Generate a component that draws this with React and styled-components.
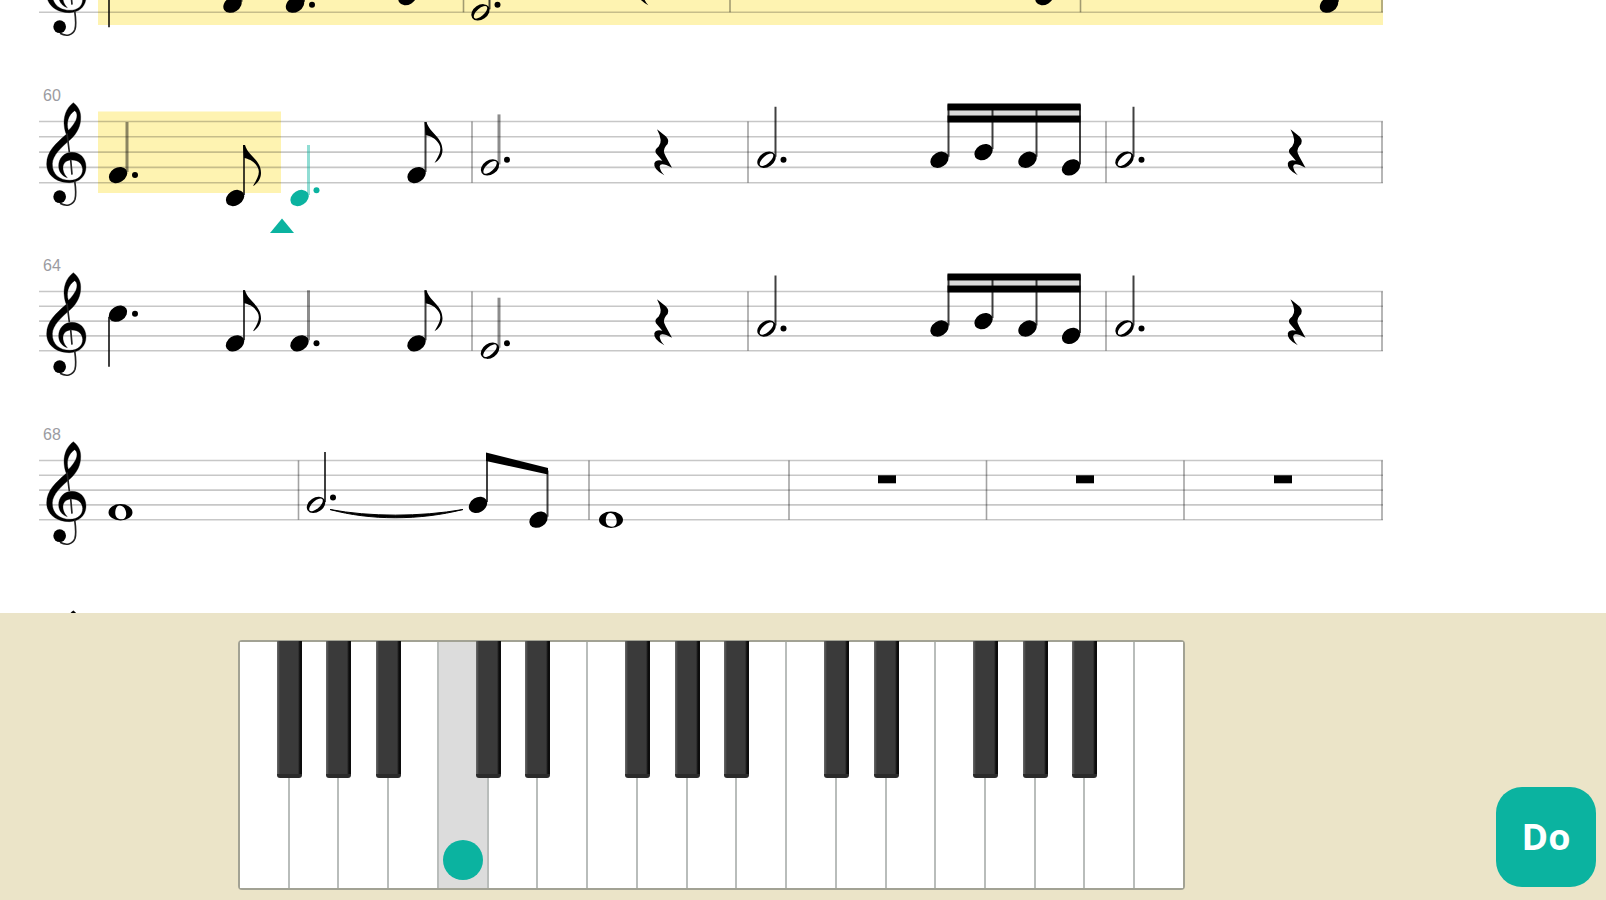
import React from 'react';
import styled, { createGlobalStyle } from 'styled-components';

const TEAL = '#0bb3a0';

const GlobalStyle = createGlobalStyle`
  * {
    box-sizing: border-box;
  }

  body {
    margin: 0;
    background: #fff;
  }
`

const Page = styled.main`
  height: 100vh;
  min-height: 480px;
  display: flex;
  flex-direction: column;
`

const Score = styled.section`
  flex: 1;
  min-height: 0;
  overflow: hidden;
`

/* the sheet is scrolled so that the current staff is the second one */
const Sheet = styled.div`
  margin-top: -85px;
`

const Row = styled.div`
  display: grid;
  height: ${props => props.$height}px;

  > * {
    grid-area: 1 / 1;
  }
`

const MeasureNumber = styled.span`
  padding-left: 43px;
  font-family: 'Liberation Sans Narrow', 'Liberation Sans', sans-serif;
  font-size: 16px;
  line-height: 22px;
  color: #9b9ba1;
`

const StaffSvg = styled.svg`
  display: block;
  width: 100%;
  max-width: 1400px;
  height: 170px;
`

const Panel = styled.section`
  display: flex;
  justify-content: space-between;
  align-items: flex-end;
  gap: 24px;
  padding: 27px 10px 10px 238px;
  background: #ebe4c8;
`

const Keyboard = styled.div`
  flex: 0 1 947px;
  display: flex;
  height: 250px;
  border: 2px solid #a2a294;
  border-radius: 4px;
  background: #fff;
`

const KeySlot = styled.div`
  position: relative;
  flex: 1;
  display: flex;

  & + & {
    border-left: 2px solid #b9bdbb;
  }
`

const WhiteKey = styled.button`
  flex: 1;
  display: flex;
  justify-content: center;
  align-items: flex-end;
  padding: 0 0 8px;
  border: 0;
  background: ${props => props.$active ? '#dcdcdc' : '#fff'};
`

const BlackKey = styled.button`
  position: absolute;
  top: -1px;
  right: -14px;
  z-index: 1;
  width: 25px;
  height: 137px;
  padding: 0;
  border: 0;
  border-bottom: 4px solid #2b2b2b;
  border-radius: 0 0 3px 3px;
  background: linear-gradient(to right, #6a6a6a 0, #3a3a3a 3px, #3a3a3a 21px, #0c0c0c 23px);
`

const KeyDot = styled.span`
  flex: none;
  width: 40px;
  height: 40px;
  border-radius: 50%;
  background: ${TEAL};
`

const NoteButton = styled.button`
  flex: none;
  width: 100px;
  height: 100px;
  margin-bottom: 3px;
  padding: 0;
  border: 0;
  border-radius: 26px;
  background: ${TEAL};
  color: #fff;
  font-family: 'Open Sans', 'Noto Sans', sans-serif;
  font-size: 36px;
  font-weight: 700;
  line-height: 48px;
`

// p counts staff steps down from the top line, h is the kind of head
const fourBars = [472, 748, 1106, 1382];

const sixteenths = [
  { x: 939.5, p: 5, stemTop: -17 },
  { x: 983.5, p: 4, stemTop: -17 },
  { x: 1027.5, p: 5, stemTop: -17 },
  { x: 1071, p: 6, stemTop: -17 },
];

const sixteenthBeams = [
  '947.5,-18 1080.5,-18 1080.5,-11 947.5,-11',
  '947.5,-6 1080.5,-6 1080.5,1 947.5,1',
];

const rows = [
  {
    height: 170, gap: 15.2, bars: [463.5, 730, 1080.5, 1382],
    played: { from: 98, to: 1383, bottom: 73.5 },
    notes: [
      { x: 118, p: 3, down: true },
      { x: 232.5, p: 7 },
      { x: 295, p: 7, dot: 7 },
      { x: 407.5, p: 6 },
      { x: 480.5, p: 8, h: 'half', dot: 7 },
      { x: 1044.5, p: 6 },
      { x: 1329, p: 7 },
    ],
    rests: [646],
  },
  {
    number: 60, height: 170, gap: 15.3, bars: fourBars,
    played: { from: 98, to: 281, bottom: 71.5 },
    notes: [
      { x: 118, p: 7, dot: 7, soft: true },
      { x: 235, p: 10, flag: true },
      { x: 299.5, p: 10, dot: 9, current: true },
      { x: 416.5, p: 7, flag: true },
      { x: 490, p: 6, h: 'half', dot: 5, soft: true },
      { x: 766.5, p: 5, h: 'half', dot: 5 },
      ...sixteenths,
      { x: 1124.5, p: 5, h: 'half', dot: 5 },
    ],
    beams: sixteenthBeams, rests: [662, 1295.5], cursor: 282,
  },
  {
    number: 64, height: 169, gap: 14.8, bars: fourBars,
    notes: [
      { x: 118, p: 3, dot: 3, down: true },
      { x: 235, p: 7, flag: true },
      { x: 299.5, p: 7, dot: 7, soft: true },
      { x: 416.5, p: 7, flag: true },
      { x: 490, p: 8, h: 'half', dot: 7, soft: true },
      { x: 766.5, p: 5, h: 'half', dot: 5 },
      ...sixteenths,
      { x: 1124.5, p: 5, h: 'half', dot: 5 },
    ],
    beams: sixteenthBeams, rests: [662, 1295.5],
  },
  {
    number: 68, height: 169, gap: 14.8, bars: [298.5, 589, 789, 986.5, 1184, 1382],
    notes: [
      { x: 120.5, p: 7, h: 'whole' },
      { x: 316, p: 6, h: 'half', dot: 5 },
      { x: 478, p: 6, stemTop: -6 },
      { x: 538.5, p: 8, stemTop: 10 },
      { x: 611, p: 8, h: 'whole' },
    ],
    beams: ['486,-8 548,7.5 548,14 486,0.5'],
    tie: 'M330 49 C370 60 420 60 463 49 C420 56.5 370 56.5 330 49Z',
    wholeRests: [887, 1085, 1283],
  },
  { height: 170, gap: 14.8, bars: [1382] },
];

const Clef = () => (
  <g transform="translate(30 -41.5) scale(0.3333)">
    <path
      fillRule="evenodd"
      stroke="#000"
      d="M130 68 C108 84 99 112 103 140 C104 150 107 158 109 163 C78 190 50 214 50 252 C50 287 82 309 119 308 C149 307 168 288 168 261 C168 233 149 217 126 217 C102 217 86 235 86 257 C86 275 96 288 112 293 C101 282 98 270 99 260 C101 246 112 240 125 240 C146 240 157 252 158 268 C158 289 142 301 120 301 C88 301 66 282 67 251 C68 226 94 202 122 178 C142 159 153 137 152 110 C152 92 143 78 130 68Z M134 92 C144 98 142 115 135 126 C128 138 121 146 115 151 C108 128 115 104 134 92Z"
    />
    <path d="M111 160 L118 216 M122 238 L126 284 M134 302 C138 330 139 344 135 358 C128 377 108 380 90 370" fill="none" stroke="#222" strokeWidth="5" />
    <circle cx="89" cy="350" r="19" />
  </g>
)

const Rest = ({ x }) => (
  <path
    transform={`translate(${x} 31) scale(0.3333) translate(-607 -458)`}
    d="M592 388 L619 410 Q633 425 619 438 Q607 453 618 469 L637 504 Q603 486 600 499 Q600 511 614 526 Q580 508 584 490 Q590 478 608 483 L589 460 Q583 450 597 440 Q611 424 592 388Z"
  />
)

const Note = ({ x, p, gap, h, dot, down, flag, current, soft, stemTop }) => {
  const y = p * gap / 2;
  const color = current ? TEAL : '#000';
  const stemX = down ? x - 9 : x + 9;
  const end = stemTop !== undefined ? stemTop : down ? y + 53 : y - 53;
  const faded = soft || current;

  return (
    <g fill={color}>
      {h !== 'whole' && (
        <line
          x1={stemX} x2={stemX} y1={down ? y + 3 : y - 3} y2={end}
          stroke={color}
          strokeOpacity={faded ? 0.45 : 0.75}
          strokeWidth={faded ? 3 : 2}
        />
      )}
      {!h && <ellipse cx={x} cy={y} rx="9.8" ry="7.4" transform={`rotate(-32 ${x} ${y})`} />}
      {h === 'half' && (
        <g transform={`translate(${x} ${y}) rotate(-34)`}>
          <path fillRule="evenodd" d="M-10 0 A10 7.2 0 1 1 10 0 A10 7.2 0 1 1 -10 0Z M-8.4 1 A8.4 3.7 -8 1 0 8.4 -1 A8.4 3.7 -8 1 0 -8.4 1Z" />
        </g>
      )}
      {h === 'whole' && (
        <g transform={`translate(${x} ${y})`}>
          <path fillRule="evenodd" d="M-12 0 A12 8.2 0 1 1 12 0 A12 8.2 0 1 1 -12 0Z M-5 -2 C-4 -8 1 -8 4 -4 C7 1 6 7 1 7 C-4 7 -6 3 -5 -2Z" />
        </g>
      )}
      {flag && (
        <path transform={`translate(${stemX} ${end})`} d="M-1 0 H1 C4 11 17 15 17 28 C17 34 13 39 9 41 C13 34 17 28 13.5 22 C10 16 5 14 0 13Z" />
      )}
      {dot !== undefined && <circle cx={x + 17} cy={dot * gap / 2} r="3" />}
    </g>
  );
}

const Staff = ({ row }) => {
  const { gap, played, bars, notes = [], beams = [], rests = [], wholeRests = [], tie, cursor } = row;

  return (
    <StaffSvg viewBox="0 -36.5 1400 170" preserveAspectRatio="xMinYMin meet" aria-hidden="true">
      {played && (
        <rect x={played.from} y="-10" width={played.to - played.from} height={played.bottom + 10} fill="#fef3b1" />
      )}
      <g stroke="#000" strokeOpacity="0.22" strokeWidth="1.6">
        {[0, 1, 2, 3, 4].map(i => <line key={i} x1="39" x2="1383" y1={i * gap} y2={i * gap} />)}
      </g>
      <g stroke="#000" strokeOpacity="0.36" strokeWidth="1.6">
        {bars.map(x => <line key={x} x1={x} x2={x} y1="0" y2={gap * 4} />)}
      </g>
      <Clef />
      {notes.map(note => <Note key={note.x} gap={gap} {...note} />)}
      {beams.length === 2 && <rect x="948" y="-11" width="133" height="5" fill="#000" fillOpacity="0.14" />}
      {beams.map(points => <polygon key={points} points={points} />)}
      {rests.map(x => <Rest key={x} x={x} />)}
      {wholeRests.map(x => <rect key={x} x={x - 9} y={gap} width="18" height="8" />)}
      {tie && <path d={tie} stroke="#000" strokeWidth="1" />}
      {cursor && <polygon points={`${cursor},97 ${cursor + 12},111.5 ${cursor - 12},111.5`} fill={TEAL} />}
    </StaffSvg>
  );
}

const names = ['Fa', 'Sol', 'La', 'Si', 'Do', 'Re', 'Mi'];
const keys = Array.from({ length: 19 }, (_, i) => names[i % 7]);
const ACTIVE_KEY = 4;

const App = () => (
  <>
    <GlobalStyle />
    <Page>
      <Score>
        <Sheet>
          {rows.map((row, i) => (
            <Row key={i} $height={row.height}>
              {row.number && <MeasureNumber>{row.number}</MeasureNumber>}
              <Staff row={row} />
            </Row>
          ))}
        </Sheet>
      </Score>
      <Panel>
        <Keyboard>
          {keys.map((name, i) => (
            <KeySlot key={i}>
              <WhiteKey type="button" aria-label={name} $active={i === ACTIVE_KEY}>
                {i === ACTIVE_KEY && <KeyDot />}
              </WhiteKey>
              {/* no sharp after Si and Mi, nor on the last key */}
              {name !== 'Si' && name !== 'Mi' && i < keys.length - 1 && (
                <BlackKey type="button" aria-label={`${name} sostenido`} />
              )}
            </KeySlot>
          ))}
        </Keyboard>
        <NoteButton type="button">Do</NoteButton>
      </Panel>
    </Page>
  </>
)

export default App;
